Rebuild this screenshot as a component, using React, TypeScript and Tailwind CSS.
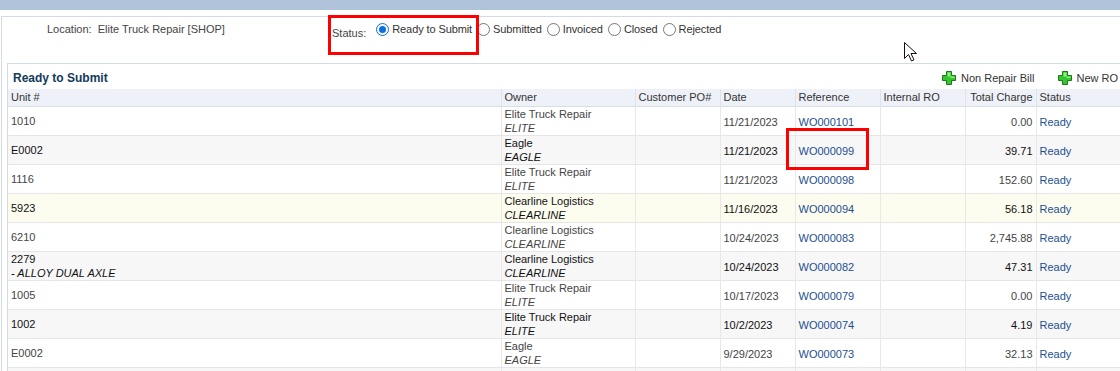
import React from "react";

type Row = {
  unit: string;
  sub?: string;
  owner: string;
  code: string;
  date: string;
  ref: string;
  total: string;
};

const rows: Row[] = [
  { unit: "1010", owner: "Elite Truck Repair", code: "ELITE", date: "11/21/2023", ref: "WO000101", total: "0.00" },
  { unit: "E0002", owner: "Eagle", code: "EAGLE", date: "11/21/2023", ref: "WO000099", total: "39.71" },
  { unit: "1116", owner: "Elite Truck Repair", code: "ELITE", date: "11/21/2023", ref: "WO000098", total: "152.60" },
  { unit: "5923", owner: "Clearline Logistics", code: "CLEARLINE", date: "11/16/2023", ref: "WO000094", total: "56.18" },
  { unit: "6210", owner: "Clearline Logistics", code: "CLEARLINE", date: "10/24/2023", ref: "WO000083", total: "2,745.88" },
  { unit: "2279", sub: "- ALLOY DUAL AXLE", owner: "Clearline Logistics", code: "CLEARLINE", date: "10/24/2023", ref: "WO000082", total: "47.31" },
  { unit: "1005", owner: "Elite Truck Repair", code: "ELITE", date: "10/17/2023", ref: "WO000079", total: "0.00" },
  { unit: "1002", owner: "Elite Truck Repair", code: "ELITE", date: "10/2/2023", ref: "WO000074", total: "4.19" },
  { unit: "E0002", owner: "Eagle", code: "EAGLE", date: "9/29/2023", ref: "WO000073", total: "32.13" },
  { unit: "6208", owner: "Clearline Logistics", code: "CLEARLINE", date: "9/28/2023", ref: "WO000072", total: "18.40" },
];

const rowBg = (i: number) => {
  if (i === 3) return "bg-[#fcfcef]";
  return i % 2 === 1 ? "bg-[#f7f7f7]" : "bg-white";
};

const Radio = ({ checked, label }: { checked?: boolean; label: string }) => (
  <label className="flex items-center">
    {checked ? (
      <span className="flex h-[13px] w-[13px] items-center justify-center rounded-full border border-[#0a6fe0] bg-white">
        <span className="h-[7px] w-[7px] rounded-full bg-[#0a6fe0]" />
      </span>
    ) : (
      <span className="h-[13px] w-[13px] rounded-full border border-[#777] bg-white" />
    )}
    <span className="ml-[3px] mr-[5px] tracking-[-0.1px] text-[#333]">{label}</span>
  </label>
);

const PlusIcon = () => (
  <svg width="16" height="16" viewBox="0 0 16 16">
    <path
      d="M5.5 1.5h5v4h4v5h-4v4h-5v-4h-4v-5h4z"
      fill="#34c62c"
      stroke="#1b7a17"
      strokeWidth="1"
    />
    <path d="M6.5 2.5h3v4h4v1.5h-4v-1.5h-3z" fill="#8ef083" />
  </svg>
);

const Cursor = () => (
  <svg width="13" height="20" viewBox="0 0 13 20">
    <path
      d="M0.5 0.5v16l4-4 3 6.5 2.5-1.2-3-6.3h5.5z"
      fill="#fff"
      stroke="#111"
      strokeWidth="1"
      strokeLinejoin="round"
    />
  </svg>
);

export default function App() {
  return (
    <div className="relative h-[371px] w-[1120px] overflow-hidden bg-white font-['Liberation_Sans',Arial,sans-serif] text-[11px] text-[#333]">
      <div className="h-[10px] bg-[#afc4d8]" />
      <div className="mt-[6px] ml-px border-l border-t border-[#d3dce6]">
        {/* filters */}
        <div className="flex h-[46px] items-start pt-[4px]">
          <div className="w-[330px] pl-[45px] text-[#444]">
            Location:&nbsp; Elite Truck Repair [SHOP]
          </div>
          <div className="flex items-start">
            <span className="mt-[4px] mr-[10px] text-[#444]">Status:</span>
            <Radio checked label="Ready to Submit" />
            <Radio label="Submitted" />
            <Radio label="Invoiced" />
            <Radio label="Closed" />
            <Radio label="Rejected" />
          </div>
        </div>

        {/* results panel */}
        <div className="ml-[5px] border-l border-t border-[#d3dce6]">
          <div className="flex h-[25px] items-center pl-[5px] pt-[3px]">
            <span className="text-[12px] font-bold text-[#123a5c]">Ready to Submit</span>
            <div className="ml-auto flex items-center pr-[2px] text-[#333]">
              <PlusIcon />
              <span className="ml-[4px]">Non Repair Bill</span>
              <span className="ml-[23px]">
                <PlusIcon />
              </span>
              <span className="ml-[3px]">New RO</span>
            </div>
          </div>

          <table className="w-[1125px] table-fixed border-collapse">
            <colgroup>
              <col className="w-[493px]" />
              <col className="w-[134px]" />
              <col className="w-[85px]" />
              <col className="w-[75px]" />
              <col className="w-[85px]" />
              <col className="w-[85px]" />
              <col className="w-[71px]" />
              <col className="w-[97px]" />
            </colgroup>
            <thead>
              <tr className="h-[17px] border-b border-[#d6dde8] bg-[#eef2f8] text-left text-[#333]">
                <th className="border-r border-[#dde3ec] px-[3px] font-normal leading-[16px]">Unit #</th>
                <th className="border-r border-[#dde3ec] px-[3px] font-normal">Owner</th>
                <th className="border-r border-[#dde3ec] px-[3px] font-normal">Customer PO#</th>
                <th className="border-r border-[#dde3ec] px-[3px] font-normal">Date</th>
                <th className="border-r border-[#dde3ec] px-[3px] font-normal">Reference</th>
                <th className="border-r border-[#dde3ec] px-[3px] font-normal">Internal RO</th>
                <th className="border-r border-[#dde3ec] px-[3px] text-right font-normal">Total Charge</th>
                <th className="px-[3px] font-normal">Status</th>
              </tr>
            </thead>
            <tbody>
              {rows.map((r, i) => (
                <tr
                  key={i}
                  className={`h-[29px] border-b border-[#e6e6e6] leading-[14px] ${rowBg(i)} ${
                    i % 2 === 1 ? "text-[#111]" : "text-[#444]"
                  }`}
                >
                  <td className="border-r border-[#e8e8e8] px-[3px] align-middle">
                    <div>{r.unit}</div>
                    {r.sub && <div className="italic">{r.sub}</div>}
                  </td>
                  <td className="border-r border-[#e8e8e8] px-[3px] align-middle">
                    <div className="whitespace-nowrap">{r.owner}</div>
                    <div className="italic">{r.code}</div>
                  </td>
                  <td className="border-r border-[#e8e8e8] px-[3px]" />
                  <td className="border-r border-[#e8e8e8] px-[3px] pt-[2px]">{r.date}</td>
                  <td className="border-r border-[#e8e8e8] px-[3px] pt-[2px] text-[#1d4f91]">{r.ref}</td>
                  <td className="border-r border-[#e8e8e8] px-[3px]" />
                  <td className="border-r border-[#e8e8e8] px-[3px] pt-[2px] text-right">{r.total}</td>
                  <td className="px-[3px] pt-[2px] text-[#1d4f91]">Ready</td>
                </tr>
              ))}
            </tbody>
          </table>
        </div>
      </div>

      {/* annotations */}
      <div className="absolute left-[328px] top-[15px] h-[40px] w-[151px] border-[3px] border-[#ff0000]" />
      <div className="absolute left-[786px] top-[128px] h-[42px] w-[83px] border-[3px] border-[#ff0000]" />
      <div className="absolute left-[904px] top-[42px]">
        <Cursor />
      </div>
    </div>
  );
}
